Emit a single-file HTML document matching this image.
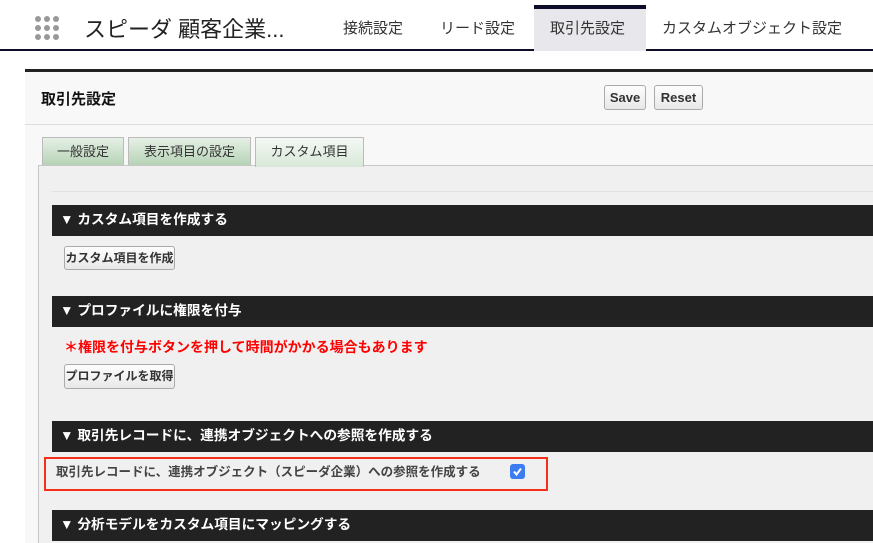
<!DOCTYPE html>
<html><head><meta charset="utf-8"><style>
*{margin:0;padding:0;box-sizing:border-box}
html,body{width:873px;height:543px;overflow:hidden}
body{background:#fff;font-family:"Liberation Sans","Noto Sans CJK JP",sans-serif;position:relative}
.abs{position:absolute}
.hdr{left:0;top:0;width:873px;height:51px;background:#fff;border-bottom:2px solid #0d0d2a}
.dot{position:absolute;width:6px;height:6px;border-radius:50%;background:#999}
.title{left:84px;top:12px;font-size:22px;color:#222;white-space:nowrap}
.nav{top:17px;font-size:15px;color:#333;white-space:nowrap}
.act{left:534px;top:5px;width:112px;height:46px;background:#e8e8ec;border-top:4px solid #0d0d2a}
.panel{left:25px;top:69px;width:860px;height:480px;background:#f8f8f8;border-top:3px solid #222}
.ptitle{left:41px;top:88px;font-size:15px;font-weight:bold;color:#111}
.btn{position:absolute;border:1px solid #aaa;border-radius:3px;background:linear-gradient(#fdfdfd,#e8e8e8);font-size:13px;font-weight:bold;color:#333;text-align:center;white-space:nowrap;overflow:hidden}
.tab{position:absolute;top:137px;height:29px;border:1px solid #bbb;border-bottom:none;background:linear-gradient(#e6f0e6,#b4d2b4);font-size:13px;color:#333;text-align:center;line-height:28px;white-space:nowrap}
.content{left:38px;top:165px;width:840px;height:400px;background:#f0f0f0;border-left:1px solid #c8c8c8;border-top:1px solid #c8c8c8}
.sec{position:absolute;left:52px;width:830px;height:31px;background:#222;color:#fff;font-size:13.7px;font-weight:bold;line-height:30px;padding-left:8px;white-space:nowrap}
</style></head><body>
<div class="abs hdr"></div>
<div class="dot" style="left:35px;top:16px"></div><div class="dot" style="left:44px;top:16px"></div><div class="dot" style="left:53px;top:16px"></div>
<div class="dot" style="left:35px;top:25px"></div><div class="dot" style="left:44px;top:25px"></div><div class="dot" style="left:53px;top:25px"></div>
<div class="dot" style="left:35px;top:34px"></div><div class="dot" style="left:44px;top:34px"></div><div class="dot" style="left:53px;top:34px"></div>
<div class="abs title">スピーダ 顧客企業...</div>
<div class="abs act"></div>
<div class="abs nav" style="left:343px">接続設定</div>
<div class="abs nav" style="left:440px">リード設定</div>
<div class="abs nav" style="left:550px">取引先設定</div>
<div class="abs nav" style="left:662px">カスタムオブジェクト設定</div>
<div class="abs panel"></div>
<div class="abs" style="left:25px;top:124px;width:860px;height:1px;background:#ddd"></div>
<div class="abs ptitle">取引先設定</div>
<div class="btn" style="left:604px;top:85px;width:42px;height:25px;line-height:23px">Save</div>
<div class="btn" style="left:654px;top:85px;width:49px;height:25px;line-height:23px">Reset</div>
<div class="tab" style="left:42px;width:82px">一般設定</div>
<div class="tab" style="left:128px;width:123px">表示項目の設定</div>
<div class="abs content"></div>
<div class="tab" style="left:255px;width:109px;height:30px;background:linear-gradient(#f4f8f4,#d8e8d8)">カスタム項目</div>
<div class="abs" style="left:52px;top:191px;width:830px;height:1px;background:#e2e2e2"></div>
<div class="sec" style="top:205px">▼ カスタム項目を作成する</div>
<div class="btn" style="left:64px;top:246px;width:111px;height:24px;line-height:22px;font-size:12px">カスタム項目を作成</div>
<div class="sec" style="top:296px">▼ プロファイルに権限を付与</div>
<div class="abs" style="left:64px;top:337px;font-size:14px;font-weight:bold;color:#f00;white-space:nowrap">＊権限を付与ボタンを押して時間がかかる場合もあります</div>
<div class="btn" style="left:64px;top:364px;width:111px;height:25px;line-height:23px;font-size:12px">プロファイルを取得</div>
<div class="sec" style="top:421px">▼ 取引先レコードに、連携オブジェクトへの参照を作成する</div>
<div class="abs" style="left:44px;top:457px;width:504px;height:34px;border:2px solid #f5301a"></div>
<div class="abs" style="left:56px;top:461px;font-size:12.5px;font-weight:bold;color:#444;white-space:nowrap">取引先レコードに、連携オブジェクト（スピーダ企業）への参照を作成する</div>
<div class="abs" style="left:510px;top:464px;width:15px;height:15px;border-radius:3px;background:#3b7cf0"></div>
<svg class="abs" style="left:510px;top:464px" width="15" height="15"><path d="M4 7.5 L6.5 10.5 L11 4.5" fill="none" stroke="#fff" stroke-width="2"/></svg>
<div class="sec" style="top:510px">▼ 分析モデルをカスタム項目にマッピングする</div>
</body></html>
